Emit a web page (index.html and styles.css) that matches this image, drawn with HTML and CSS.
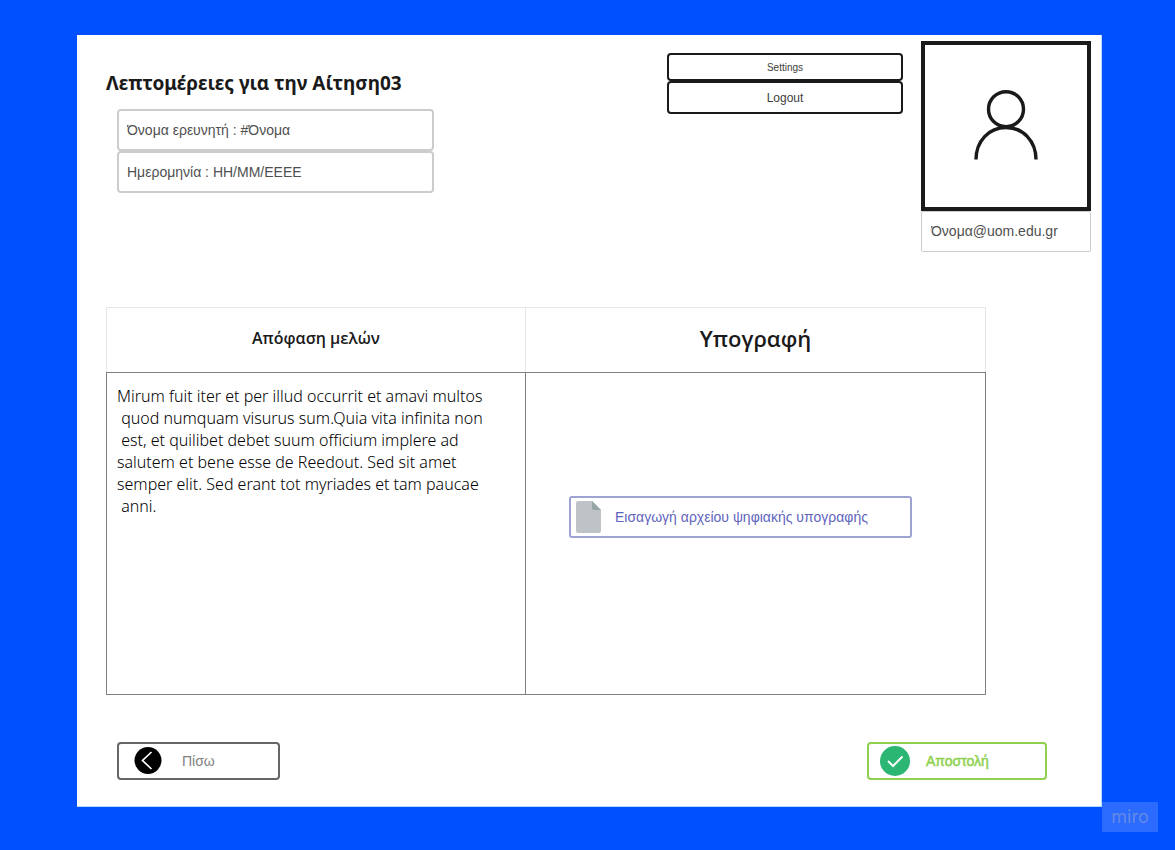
FILE: index.html
```html
<!DOCTYPE html>
<html lang="el">
<head>
<meta charset="utf-8">
<meta name="viewport" content="width=device-width, initial-scale=1">
<title>Λεπτομέρειες για την Αίτηση03</title>
<link rel="stylesheet" href="styles.css">
</head>
<body>
<main class="panel">
  <header class="header">
    <section class="details">
      <h1 class="title">Λεπτομέρειες για την Αίτηση03</h1>
      <div class="fields">
        <input class="field" type="text" aria-label="Όνομα ερευνητή" value="Όνομα ερευνητή : #Όνομα">
        <input class="field" type="text" aria-label="Ημερομηνία" value="Ημερομηνία : HH/MM/EEEE">
      </div>
    </section>
    <nav class="menu">
      <button class="menu-button menu-button-small" type="button">Settings</button>
      <button class="menu-button" type="button">Logout</button>
    </nav>
    <aside class="profile">
      <div class="avatar">
        <svg width="64" height="70" viewBox="0 0 64 70" fill="none" stroke="#1a1a1a" stroke-width="3.4" aria-hidden="true">
          <circle cx="32" cy="19.200" r="17.500"/>
          <path d="M2 69.500C2 51 15 37.500 32 37.500S62 51 62 69.500"/>
        </svg>
      </div>
      <input class="email" type="email" aria-label="Email" value="Όνομα@uom.edu.gr">
    </aside>
  </header>

  <table class="decision">
    <thead>
      <tr>
        <th class="head head-members" scope="col">Απόφαση μελών</th>
        <th class="head head-signature" scope="col">Υπογραφή</th>
      </tr>
    </thead>
    <tbody>
      <tr>
        <td class="cell cell-text">Mirum fuit iter et per illud occurrit et amavi multos
 quod numquam visurus sum.Quia vita infinita non
 est, et quilibet debet suum officium implere ad
salutem et bene esse de Reedout. Sed sit amet
semper elit. Sed erant tot myriades et tam paucae
 anni.</td>
        <td class="cell cell-signature">
          <button class="upload" type="button">
            <svg width="25" height="32" viewBox="0 0 25 32" aria-hidden="true">
              <path fill="#bdc3c7" d="M2 0H16L25 9V30a2 2 0 0 1-2 2H2a2 2 0 0 1-2-2V2a2 2 0 0 1 2-2z"/>
              <path fill="#95a5a5" d="M16 0L25 9H18a2 2 0 0 1-2-2z"/>
            </svg>
            <span>Εισαγωγή αρχείου ψηφιακής υπογραφής</span>
          </button>
        </td>
      </tr>
    </tbody>
  </table>

  <footer class="actions">
    <button class="action back" type="button">
      <svg width="28" height="28" viewBox="0 0 28 28" fill="none" aria-hidden="true">
        <circle cx="14" cy="13.500" r="13.500" fill="#000"/>
        <path d="M17.500 5L8.500 13.500L17.500 22" stroke="#fff" stroke-width="1.700"/>
      </svg>
      <span>Πίσω</span>
    </button>
    <button class="action send" type="button">
      <svg width="30" height="30" viewBox="0 0 30 30" fill="none" aria-hidden="true">
        <circle cx="15" cy="15" r="15" fill="#2bb673"/>
        <path d="M8 15L13 20L22.500 10.500" stroke="#fff" stroke-width="2"/>
      </svg>
      <span>Αποστολή</span>
    </button>
  </footer>
</main>
<div class="watermark">miro</div>
</body>
</html>
```

FILE: styles.css
```css
* {
  box-sizing: border-box;
}

body {
  position: relative;
  min-height: 100vh;
  margin: 0;
  padding: 35px 73px 43px 77px;
  background: #0050ff;
  color: #1a1a1a;
  font-family: "Liberation Sans", Arial, sans-serif;
  font-size: 14px;
}

button,
input {
  margin: 0;
  background: #fff;
  color: inherit;
  font: inherit;
}

.panel {
  padding: 6px 10px 26px 29px;
  border: 1px solid #b5d8ff;
  border-width: 0 1px 1px 0;
  background: #fff;
}

.header {
  display: flex;
  align-items: flex-start;
}

.details {
  flex: 1;
  padding-top: 28px;
}

.title {
  margin: 0;
  font-family: "Noto Sans", sans-serif;
  font-size: 19px;
  font-weight: 700;
  line-height: 28px;
}

.fields {
  display: flex;
  flex-direction: column;
  width: 317px;
  margin: 12px 0 0 11px;
}

.field {
  height: 42px;
  padding: 0 8px;
  border: 2px solid #ccc;
  border-radius: 4px;
  color: #505050;
}

.menu {
  display: flex;
  flex-direction: column;
  width: 236px;
  margin: 12px 18px 0 0;
}

.menu-button {
  height: 33px;
  padding: 0;
  border: 2px solid #1a1a1a;
  border-radius: 4px;
  color: #404040;
  font-size: 12px;
}

.menu-button-small {
  height: 28px;
  font-size: 10px;
}

.profile {
  display: flex;
  flex-direction: column;
  width: 170px;
}

.avatar {
  display: flex;
  align-items: center;
  justify-content: center;
  height: 170px;
  padding-bottom: 2px;
  border: 4px solid #1a1a1a;
}

.email {
  height: 41px;
  padding: 0 9px 2px;
  border: 1px solid #ccc;
  border-radius: 2px;
  color: #505050;
}

.decision {
  width: calc(100% - 105px);
  margin-top: 55px;
  border-collapse: collapse;
  table-layout: fixed;
}

.head {
  height: 65px;
  padding: 0 0 4px;
  border: 1px solid #e6e6e6;
  border-bottom-color: #808080;
  font-family: "Open Sans", sans-serif;
  font-weight: 600;
}

.head-members {
  width: 419px;
  font-size: 16px;
}

.head-signature {
  font-size: 22px;
}

.cell {
  height: 322px;
  border: 1px solid #808080;
}

.cell-text {
  padding: 12px 10px;
  color: #000;
  font-family: "Noto Sans", sans-serif;
  font-size: 16px;
  font-weight: 300;
  line-height: 22px;
  vertical-align: top;
  white-space: pre-wrap;
}

.cell-signature {
  padding: 0 73px 34px 43px;
}

.upload {
  display: flex;
  align-items: center;
  gap: 14px;
  width: 100%;
  height: 42px;
  padding: 0 5px;
  border: 2px solid #9da3d3;
  border-radius: 3px;
  color: #6164bc;
}

.actions {
  display: flex;
  justify-content: space-between;
  margin-top: 47px;
  padding: 0 44px 0 11px;
}

.action {
  display: flex;
  align-items: center;
  height: 38px;
  border: 2px solid;
  border-radius: 4px;
}

.back {
  gap: 20px;
  width: 163px;
  padding: 0 15px;
  border-color: #666;
  color: #808080;
}

.send {
  gap: 16px;
  width: 180px;
  padding: 0 11px;
  border-color: #8fd14f;
  color: #8fd14f;
  -webkit-text-stroke: 0.5px #8fd14f;
}

.watermark {
  position: absolute;
  right: 17px;
  bottom: 18px;
  width: 56px;
  height: 30px;
  background: #2b6bff;
  color: #6488e6;
  font-family: Inter, sans-serif;
  font-size: 18px;
  line-height: 29px;
  text-align: center;
}
```
